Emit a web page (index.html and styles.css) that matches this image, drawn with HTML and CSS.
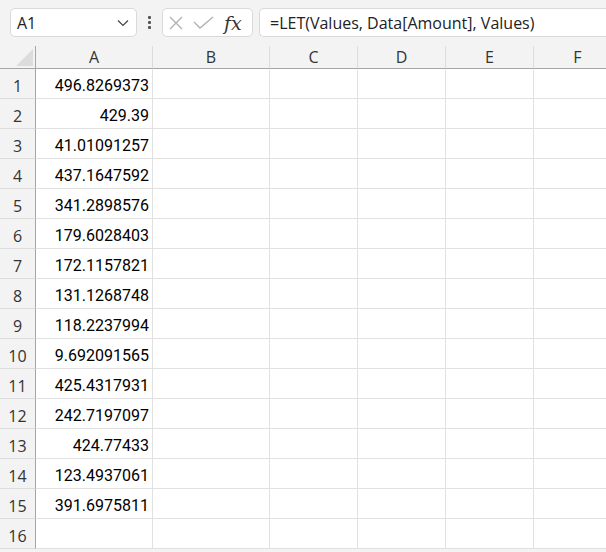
FILE: index.html
```html
<!DOCTYPE html>
<html>
<head>
<meta charset="utf-8">
<link rel="stylesheet" href="styles.css">
</head>
<body>
<div class="toolbar">
  <div class="namebox">
    <span class="name">A1</span>
    <svg class="chev" width="12" height="8" viewBox="0 0 12 8"><path d="M1 1.5 L6 6.5 L11 1.5" fill="none" stroke="#444" stroke-width="1.2"/></svg>
  </div>
  <div class="dots"><span></span><span></span><span></span></div>
  <div class="fxbox">
    <svg width="14" height="14" viewBox="0 0 14 14"><path d="M1 1 L13 13 M13 1 L1 13" stroke="#b0b0b0" stroke-width="1.3" fill="none"/></svg>
    <svg width="21" height="13" viewBox="0 0 21 13"><path d="M1 6 L7 12 L20 1" stroke="#b0b0b0" stroke-width="1.3" fill="none"/></svg>
    <span class="fx">fx</span>
  </div>
  <div class="formula">=LET(Values, Data[Amount], Values)</div>
</div>
<div class="sheetwrap">
<div class="sheet">
  <div class="corner"><span class="tri"></span></div>
  <div class="ch">A</div><div class="ch">B</div><div class="ch">C</div><div class="ch">D</div><div class="ch">E</div><div class="ch">F</div>

  <div class="rh">1</div><div class="c num">496.8269373</div><div class="c"></div><div class="c"></div><div class="c"></div><div class="c"></div><div class="c"></div>
  <div class="rh">2</div><div class="c num">429.39</div><div class="c"></div><div class="c"></div><div class="c"></div><div class="c"></div><div class="c"></div>
  <div class="rh">3</div><div class="c num">41.01091257</div><div class="c"></div><div class="c"></div><div class="c"></div><div class="c"></div><div class="c"></div>
  <div class="rh">4</div><div class="c num">437.1647592</div><div class="c"></div><div class="c"></div><div class="c"></div><div class="c"></div><div class="c"></div>
  <div class="rh">5</div><div class="c num">341.2898576</div><div class="c"></div><div class="c"></div><div class="c"></div><div class="c"></div><div class="c"></div>
  <div class="rh">6</div><div class="c num">179.6028403</div><div class="c"></div><div class="c"></div><div class="c"></div><div class="c"></div><div class="c"></div>
  <div class="rh">7</div><div class="c num">172.1157821</div><div class="c"></div><div class="c"></div><div class="c"></div><div class="c"></div><div class="c"></div>
  <div class="rh">8</div><div class="c num">131.1268748</div><div class="c"></div><div class="c"></div><div class="c"></div><div class="c"></div><div class="c"></div>
  <div class="rh">9</div><div class="c num">118.2237994</div><div class="c"></div><div class="c"></div><div class="c"></div><div class="c"></div><div class="c"></div>
  <div class="rh">10</div><div class="c num">9.692091565</div><div class="c"></div><div class="c"></div><div class="c"></div><div class="c"></div><div class="c"></div>
  <div class="rh">11</div><div class="c num">425.4317931</div><div class="c"></div><div class="c"></div><div class="c"></div><div class="c"></div><div class="c"></div>
  <div class="rh">12</div><div class="c num">242.7197097</div><div class="c"></div><div class="c"></div><div class="c"></div><div class="c"></div><div class="c"></div>
  <div class="rh">13</div><div class="c num">424.77433</div><div class="c"></div><div class="c"></div><div class="c"></div><div class="c"></div><div class="c"></div>
  <div class="rh">14</div><div class="c num">123.4937061</div><div class="c"></div><div class="c"></div><div class="c"></div><div class="c"></div><div class="c"></div>
  <div class="rh">15</div><div class="c num">391.6975811</div><div class="c"></div><div class="c"></div><div class="c"></div><div class="c"></div><div class="c"></div>
  <div class="rh">16</div><div class="c num"></div><div class="c"></div><div class="c"></div><div class="c"></div><div class="c"></div><div class="c"></div>
</div>
</div>
</body>
</html>
```
FILE: styles.css
```css
html, body {
  margin: 0;
  padding: 0;
  background: #f3f3f3;
  overflow: hidden;
  width: 606px;
  height: 552px;
  font-family: "Open Sans", "Noto Sans", sans-serif;
  color: #222;
}
.toolbar {
  display: flex;
  align-items: center;
  height: 29px;
  padding: 8px 0 9px 10px;
}
.toolbar > * {
  flex: none;
}
.namebox {
  box-sizing: border-box;
  width: 127px;
  height: 29px;
  background: #fff;
  border: 1px solid #dadada;
  border-radius: 5px;
  display: flex;
  align-items: center;
  justify-content: space-between;
  padding: 0 7px 0 6px;
}
.name {
  font-size: 16px;
}
.chev { margin-top: 1px; }
.dots {
  width: 25px;
  display: flex;
  flex-direction: column;
  align-items: center;
  gap: 2px;
}
.dots span {
  width: 3px;
  height: 3px;
  background: #555;
  border-radius: 1px;
}
.fxbox {
  box-sizing: border-box;
  width: 91px;
  height: 29px;
  background: #fff;
  border: 1px solid #dadada;
  border-radius: 5px;
  display: flex;
  align-items: center;
  gap: 10px;
  padding: 0 6px 0 6px;
}
.fx {
  font-family: "DejaVu Serif", "Liberation Serif", serif;
  font-style: italic;
  font-size: 19px;
  color: #333;
}
.toolbar > .formula {
  flex: 1 1 auto;
  min-width: 0;
}
.formula {
  box-sizing: border-box;
  margin-left: 6px;
  height: 29px;
  background: #fff;
  border: 1px solid #dadada;
  border-right: none;
  border-radius: 5px 0 0 5px;
  display: flex;
  align-items: center;
  padding-left: 10px;
  font-size: 16px;
  color: #222;
  white-space: nowrap;
  overflow: hidden;
}
.sheetwrap {
  width: 606px;
  overflow: hidden;
}
.sheet {
  display: grid;
  grid-template-columns: 36px 117px 117px 88px 88px 88px 88px;
  grid-template-rows: 23px repeat(16, 30px);
  width: 622px;
}
.corner {
  box-sizing: border-box;
  border-right: 1px solid #a6a6a6;
  border-bottom: 1px solid #a6a6a6;
  position: relative;
}
.tri {
  position: absolute;
  right: 2px;
  bottom: 2px;
  width: 0;
  height: 0;
  border-left: 17px solid transparent;
  border-bottom: 17px solid #dcdcdc;
}
.ch {
  box-sizing: border-box;
  border-right: 1px solid #dcdcdc;
  border-bottom: 1px solid #a6a6a6;
  display: flex;
  align-items: center;
  justify-content: center;
  font-size: 16px;
  color: #333;
}
.rh {
  box-sizing: border-box;
  border-right: 1px solid #a6a6a6;
  border-bottom: 1px solid #dcdcdc;
  display: flex;
  align-items: center;
  justify-content: center;
  padding-top: 4px;
  font-size: 16px;
  color: #333;
}
.c {
  box-sizing: border-box;
  background: #fff;
  border-right: 1px solid #e1e1e1;
  border-bottom: 1px solid #e1e1e1;
}
.num {
  display: flex;
  align-items: flex-end;
  justify-content: flex-end;
  padding: 0 3px 3px 0;
  font-family: Roboto, sans-serif;
  font-size: 16px;
  color: #000;
}
```
